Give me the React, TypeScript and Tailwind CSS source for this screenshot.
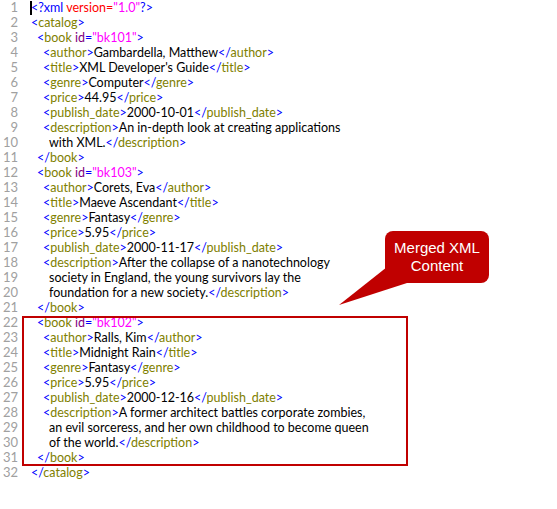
import React from "react";

type Tok = [string, string];
const P = "text-[#0000ff]";
const T = "text-[#808000]";
const X = "text-black";
const A = "text-[#800080]";
const V = "text-[#ff00ff]";
const R = "text-[#ff0000]";

const open = (n: string): Tok[] => [[P, "<"], [T, n], [P, ">"]];
const close = (n: string): Tok[] => [[P, "</"], [T, n], [P, ">"]];
const el = (n: string, v: string): Tok[] => [...open(n), [X, v], ...close(n)];
const book = (id: string): Tok[] => [[P, "<"], [T, "book"], [A, " id"], [P, "="], [V, `"${id}"`], [P, ">"]];

const lines: { i: number; t: Tok[] }[] = [
  { i: 0, t: [[P, "<?xml"], [R, " version"], [R, "="], [V, '"1.0"'], [P, "?>"]] },
  { i: 0, t: open("catalog") },
  { i: 1, t: book("bk101") },
  { i: 2, t: el("author", "Gambardella, Matthew") },
  { i: 2, t: el("title", "XML Developer's Guide") },
  { i: 2, t: el("genre", "Computer") },
  { i: 2, t: el("price", "44.95") },
  { i: 2, t: el("publish_date", "2000-10-01") },
  { i: 2, t: [...open("description"), [X, "An in-depth look at creating applications"]] },
  { i: 3, t: [[X, "with XML."], ...close("description")] },
  { i: 1, t: close("book") },
  { i: 1, t: book("bk103") },
  { i: 2, t: el("author", "Corets, Eva") },
  { i: 2, t: el("title", "Maeve Ascendant") },
  { i: 2, t: el("genre", "Fantasy") },
  { i: 2, t: el("price", "5.95") },
  { i: 2, t: el("publish_date", "2000-11-17") },
  { i: 2, t: [...open("description"), [X, "After the collapse of a nanotechnology"]] },
  { i: 3, t: [[X, "society in England, the young survivors lay the"]] },
  { i: 3, t: [[X, "foundation for a new society."], ...close("description")] },
  { i: 1, t: close("book") },
  { i: 1, t: book("bk102") },
  { i: 2, t: el("author", "Ralls, Kim") },
  { i: 2, t: el("title", "Midnight Rain") },
  { i: 2, t: el("genre", "Fantasy") },
  { i: 2, t: el("price", "5.95") },
  { i: 2, t: el("publish_date", "2000-12-16") },
  { i: 2, t: [...open("description"), [X, "A former architect battles corporate zombies,"]] },
  { i: 3, t: [[X, "an evil sorceress, and her own childhood to become queen"]] },
  { i: 3, t: [[X, "of the world."], ...close("description")] },
  { i: 1, t: close("book") },
  { i: 0, t: close("catalog") },
];

const indentCls = ["pl-[13px]", "pl-[19px]", "pl-[25px]", "pl-[31px]"];

export default function App() {
  return (
    <div className="relative w-[557px] h-[509px] bg-white overflow-hidden" style={{ fontFamily: "Lato, 'Noto Sans', sans-serif" }}>
      <div className="flex flex-col text-[12.5px] leading-[15px]">
        {lines.map((l, n) => (
          <div key={n} className="flex h-[15px] whitespace-pre">
            <div className="w-[18px] text-right text-[#a0a0a0] text-[13px]">{n + 1}</div>
            <div className={`relative ${indentCls[l.i]}`}>
              {n === 0 && <span className="absolute left-[12px] top-[1px] w-[2px] h-[14px] bg-black" />}
              {l.t.map((tk, k) => (
                <span key={k} className={tk[0]}>
                  {tk[1]}
                </span>
              ))}
            </div>
          </div>
        ))}
      </div>

      <div className="absolute left-[22px] top-[316px] w-[386px] h-[150px] border-2 border-[#c00000]" />

      <svg className="absolute left-[335px] top-[265px]" width="75" height="45" viewBox="0 0 75 45">
        <polygon points="52,2 4,40 72,18" fill="#c00000" />
      </svg>
      <div
        className="absolute left-[385px] top-[231px] w-[104px] h-[52px] bg-[#c00000] rounded-[8px] flex flex-col items-center justify-center text-white text-[15px] leading-[18px]"
        style={{ fontFamily: "'Liberation Sans', Arial, sans-serif" }}
      >
        <span>Merged XML</span>
        <span>Content</span>
      </div>
    </div>
  );
}
